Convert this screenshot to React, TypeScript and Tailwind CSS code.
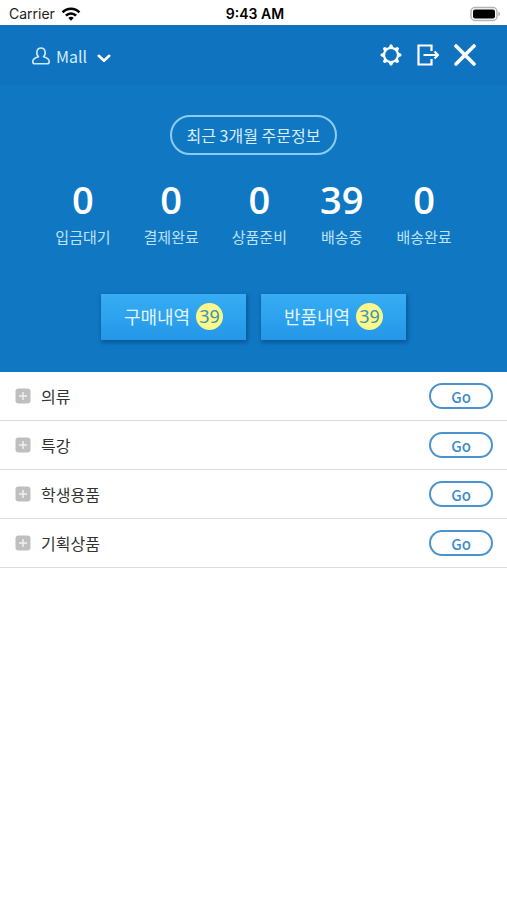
import type { ReactNode } from "react";

const stats = [
  { label: "입금대기", count: 0 },
  { label: "결제완료", count: 0 },
  { label: "상품준비", count: 0 },
  { label: "배송중", count: 39 },
  { label: "배송완료", count: 0 },
];

const categories = ["의류", "특강", "학생용품", "기획상품"];

function WifiIcon() {
  return (
    <svg width="20" height="14" viewBox="0 0 20 14" fill="none" stroke="#000" strokeWidth="2.6">
      <path d="M1.6 5.3 C6.3 0.6 13.7 0.6 18.4 5.3" />
      <path d="M4.9 8.6 C7.8 5.7 12.2 5.7 15.1 8.6" />
      <path d="M7.3 10.9 C8.9 9.4 11.1 9.4 12.7 10.9 L10 13.7Z" fill="#000" stroke="none" />
    </svg>
  );
}

function BatteryIcon() {
  return (
    <svg width="32" height="16" viewBox="0 0 32 16" fill="none">
      <rect x="2" y="1.5" width="26" height="13" rx="4" stroke="#b5b5b5" strokeWidth="1.5" />
      <rect x="4" y="3.5" width="22" height="9" rx="2" fill="#000" />
      <path d="M29.5 5.8 C31.6 6.7 31.6 9.3 29.5 10.2Z" fill="#a5a5a5" />
    </svg>
  );
}

function UserIcon() {
  return (
    <svg width="18" height="18" viewBox="0 0 18 18" fill="none" stroke="#cfe9fb" strokeWidth="1.6" strokeLinejoin="round">
      <path d="M6.5 9.8 C3.7 7.2 4.3 1 9 1 C13.7 1 14.3 7.2 11.5 9.8 C14.5 10.7 17.2 11.7 17.2 14.4 C17.2 16 16.4 16.8 15 16.8 H3 C1.6 16.8 0.8 16 0.8 14.4 C0.8 11.7 3.5 10.7 6.5 9.8Z" />
    </svg>
  );
}

function ChevronIcon() {
  return (
    <svg width="14" height="9" viewBox="0 0 14 9" fill="none" stroke="#fff" strokeWidth="2.6" strokeLinecap="round" strokeLinejoin="round">
      <path d="M1.8 1.8 L7 6.8 L12.2 1.8" />
    </svg>
  );
}

// Ring with eight short triangular teeth
function GearIcon() {
  const teeth = [0, 45, 90, 135, 180, 225, 270, 315];
  return (
    <svg width="22" height="22" viewBox="0 0 22 22" fill="none">
      <circle cx="11" cy="11" r="7" stroke="#fff" strokeWidth="2.2" />
      {teeth.map((angle) => (
        <path key={angle} d="M8.2 4.4 L10 0.6 H12 L13.8 4.4Z" fill="#fff" transform={`rotate(${angle} 11 11)`} />
      ))}
    </svg>
  );
}

function LogoutIcon() {
  return (
    <svg width="22" height="22" viewBox="0 0 22 22" fill="none" stroke="#fff" strokeWidth="2">
      <path d="M14.5 7 V1.5 H1.5 V20.5 H14.5 V15" strokeWidth="2.2" />
      <path d="M6.5 11 H20.5" />
      <path d="M17.5 7.5 L21 11 L17.5 14.5" />
    </svg>
  );
}

function CloseIcon() {
  return (
    <svg width="22" height="22" viewBox="0 0 22 22" fill="none" stroke="#fff" strokeWidth="3.6" strokeLinecap="round">
      <path d="M2 2 L20 20 M20 2 L2 20" />
    </svg>
  );
}

function IconButton({ label, children }: { label: string; children: ReactNode }) {
  return (
    <button type="button" aria-label={label} className="cursor-pointer">
      {children}
    </button>
  );
}

function OrderButton({ label, count }: { label: string; count: number }) {
  return (
    <button
      type="button"
      className="flex h-[46px] w-[145px] cursor-pointer items-center justify-center gap-1.5 bg-linear-to-b from-[#36adf4] to-[#2497e8] pb-0.5 text-lg text-[#e2f5ff] shadow-[1px_2px_4px_1px_#0b5a9a]"
    >
      {label}
      <span className="flex size-[27px] items-center justify-center rounded-full bg-[#fbf78b] font-['Noto_Sans','Noto_Sans_CJK_KR',sans-serif] text-[#3f93ad]">
        {count}
      </span>
    </button>
  );
}

export default function App() {
  return (
    <div className="min-h-screen bg-white font-['Noto_Sans_CJK_KR',sans-serif]">
      <div className="grid h-[25px] grid-cols-3 items-center pt-0.5 pr-1.5 pl-[9px] font-[Inter,sans-serif] text-sm text-[#222]">
        <div className="flex items-center gap-1.5">
          Carrier
          <WifiIcon />
        </div>
        <div className="text-center font-semibold text-black">9:43 AM</div>
        <div className="flex justify-end">
          <BatteryIcon />
        </div>
      </div>

      <header className="flex h-[60px] items-center justify-between bg-[#0f73bf] pr-[31px] pl-8">
        <button type="button" className="flex cursor-pointer items-center gap-1.5 pt-0.5 text-base text-[#d6edfc]">
          <UserIcon />
          Mall
          <span className="pt-1 pl-1">
            <ChevronIcon />
          </span>
        </button>
        <div className="flex items-center gap-[15px]">
          <IconButton label="설정">
            <GearIcon />
          </IconButton>
          <IconButton label="로그아웃">
            <LogoutIcon />
          </IconButton>
          <IconButton label="닫기">
            <CloseIcon />
          </IconButton>
        </div>
      </header>

      <section className="flex flex-col items-center bg-[#1078c2] pt-[30px] pb-8">
        <h1 className="flex h-10 items-center rounded-full border-2 border-[#8ccbf2] px-[15px] text-base text-[#d6edfc]">
          최근 3개월 주문정보
        </h1>

        <ul className="mt-6 flex justify-center gap-[33px]">
          {stats.map((stat) => (
            <li key={stat.label} className="flex flex-col items-center">
              <strong className="font-['Open_Sans','Noto_Sans_CJK_KR',sans-serif] text-[38px] leading-10 font-semibold text-white">
                {stat.count}
              </strong>
              <span className="mt-2 text-[15px] leading-5 text-[#bfe2f9]">{stat.label}</span>
            </li>
          ))}
        </ul>

        <div className="mt-[47px] flex gap-[15px]">
          <OrderButton label="구매내역" count={39} />
          <OrderButton label="반품내역" count={39} />
        </div>
      </section>

      <ul>
        {categories.map((name) => (
          <li key={name} className="flex h-[49px] items-center border-b border-[#dcdcdc] pr-3.5 pl-[15px]">
            <button type="button" className="flex cursor-pointer items-center gap-2.5 text-base text-[#333]">
              <svg width="16" height="16" viewBox="0 0 16 16" fill="none">
                <rect x="0.5" y="0.5" width="15" height="15" rx="3" fill="#bfbfbf" />
                <path d="M8 4 V12 M4 8 H12" stroke="#f2f2f2" strokeWidth="1.4" />
              </svg>
              {name}
            </button>
            <a
              href="#"
              aria-label={`${name} Go`}
              className="ml-auto flex h-[26px] w-16 items-center justify-center rounded-full border-2 border-[#4a93cf] pt-0.5 text-[15px] font-medium text-[#3d8ccb]"
            >
              Go
            </a>
          </li>
        ))}
      </ul>
    </div>
  );
}
